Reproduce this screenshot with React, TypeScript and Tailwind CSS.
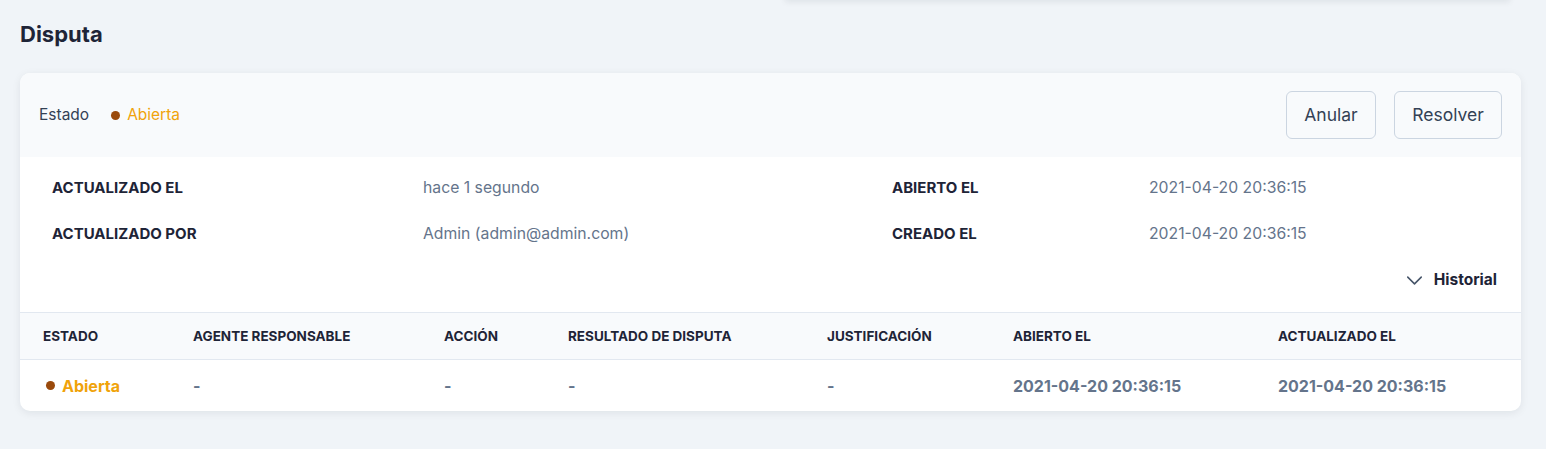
import { ChevronDown } from "lucide-react";

const details = [
  { label: "ACTUALIZADO EL", value: "hace 1 segundo", label2: "ABIERTO EL", value2: "2021-04-20 20:36:15" },
  { label: "ACTUALIZADO POR", value: "Admin (admin@admin.com)", label2: "CREADO EL", value2: "2021-04-20 20:36:15" },
];

const columns = [
  "ESTADO",
  "AGENTE RESPONSABLE",
  "ACCIÓN",
  "RESULTADO DE DISPUTA",
  "JUSTIFICACIÓN",
  "ABIERTO EL",
  "ACTUALIZADO EL",
];

const StatusDot = ({ bold }: { bold?: boolean }) => (
  <span className={`flex items-center gap-[7px] text-[#f0a30a] ${bold ? "font-bold" : ""}`}>
    <span className="w-[9px] h-[9px] rounded-full bg-[#9a4a0c]" />
    Abierta
  </span>
);

const App = () => {
  return (
    <div
      className="min-h-screen bg-[#f0f4f8] flex flex-col pl-5 pr-[25px]"
      style={{ fontFamily: "Inter, 'Noto Sans', sans-serif" }}
    >
      {/* shadow of the card above, cut off by the top edge */}
      <div className="flex justify-end">
        <div className="-mt-3 h-3 w-[725px] mr-[11px] bg-[#f0f4f8] shadow-[0_2px_6px_rgba(15,23,42,0.08)]" />
      </div>

      <h1 className="pt-5 text-[22px] leading-7 font-bold text-[#1e2437]">Disputa</h1>

      <div className="mt-[25px] bg-white rounded-[10px] shadow-[0_2px_8px_rgba(15,23,42,0.08)] overflow-hidden">
        {/* header */}
        <div className="h-[84px] bg-[#f8fafc] flex items-center justify-between pl-[19px] pr-[19px]">
          <div className="flex items-center gap-[22px] text-[15.5px]">
            <span className="text-[#334155]">Estado</span>
            <StatusDot />
          </div>
          <div className="flex gap-[18px]">
            <button className="h-12 w-[90px] rounded-md border border-[#cbd5e1] bg-[#f8fafc] text-[17.5px] text-[#334155]">
              Anular
            </button>
            <button className="h-12 w-[108px] rounded-md border border-[#cbd5e1] bg-[#f8fafc] text-[17.5px] text-[#334155]">
              Resolver
            </button>
          </div>
        </div>

        {/* details */}
        <div className="pt-[8px] pb-[9px] pl-8 pr-6">
          {details.map((row) => (
            <div key={row.label} className="grid grid-cols-[371px_469px_257px_1fr] h-[46px] items-center">
              <div className="text-[15px] font-bold text-[#1e2437]">{row.label}</div>
              <div className="text-[15.75px] text-[#64748b]">{row.value}</div>
              <div className="text-[15px] font-bold text-[#1e2437]">{row.label2}</div>
              <div className="text-[15.75px] text-[#64748b]">{row.value2}</div>
            </div>
          ))}
          <div className="h-[46px] flex items-center justify-end">
            <button className="flex items-center gap-[6px] text-[15.5px] font-bold text-[#1e2437]">
              <ChevronDown size={27} strokeWidth={1.4} className="text-[#475569]" />
              Historial
            </button>
          </div>
        </div>

        {/* history table */}
        <div className="border-t border-[#e2e8f0]">
          <div className="grid grid-cols-[150px_251px_124px_259px_186px_265px_1fr] pl-[23px] h-[47px] items-center bg-[#f8fafc] border-b border-[#e2e8f0] text-[13.5px] font-bold text-[#1e2437]">
            {columns.map((c) => (
              <div key={c}>{c}</div>
            ))}
          </div>
          <div className="grid grid-cols-[150px_251px_124px_259px_186px_265px_1fr] pl-[23px] h-[51px] items-center text-[16px] font-bold text-[#64748b]">
            <div className="pl-[3px]">
              <StatusDot bold />
            </div>
            <div>-</div>
            <div>-</div>
            <div>-</div>
            <div>-</div>
            <div>2021-04-20 20:36:15</div>
            <div>2021-04-20 20:36:15</div>
          </div>
        </div>
      </div>
    </div>
  );
};

export default App;
